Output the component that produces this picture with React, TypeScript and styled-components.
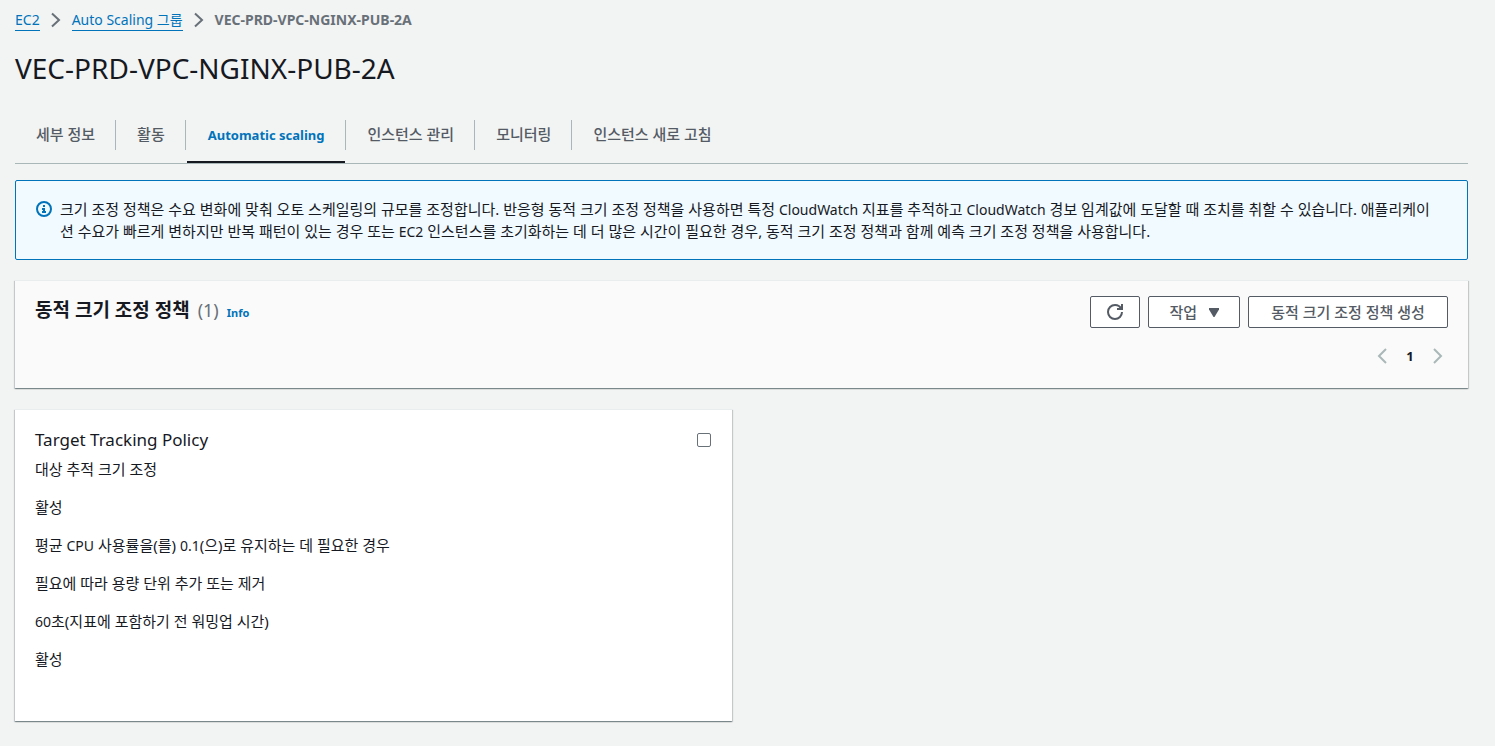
import React from "react";
import styled, { createGlobalStyle, css } from "styled-components";

const GlobalStyle = createGlobalStyle`
  *, *::before, *::after { box-sizing: border-box; }
  body {
    margin: 0;
    background: #f2f3f3;
    color: #16191f;
    font-family: "Noto Sans", "Noto Sans CJK KR", sans-serif;
    font-size: 15px;
    line-height: 22px;
  }
  h1, h2, h3, p, ul, ol { margin: 0; padding: 0; font-weight: 400; }
  ul, ol { list-style: none; }
  button, input { font: inherit; color: inherit; margin: 0; }
`;

const Page = styled.main`
  padding: 9px 27px 24px 15px;
`;

const Latin = styled.span`
  font-size: 14px;
  line-height: 1;
`;

const Breadcrumbs = styled.ol`
  display: flex;
  align-items: center;
  font-size: 14px;
`;

const Crumb = styled.li`
  display: flex;
  align-items: center;
  color: #687078;
  font-weight: 700;
`;

const CrumbLink = styled.a`
  color: #0073bb;
  font-weight: 400;
  line-height: 20px;
  text-decoration: none;
  border-bottom: 1px solid #0073bb;
`;

const CrumbArrow = styled.svg`
  width: 10px;
  height: 16px;
  margin: 0 11px;
  flex: none;
`;

const PageTitle = styled.h1`
  margin-top: 19px;
  font-size: 28px;
  line-height: 36px;
`;

const TabBar = styled.div`
  display: flex;
  margin-top: 24px;
  border-bottom: 1px solid #aab7b8;
`;

const TabCell = styled.div`
  display: flex;
  height: 53px;
  & + &::before {
    content: "";
    width: 1px;
    height: 30px;
    margin-top: 10px;
    background: #aab7b8;
  }
`;

const Tab = styled.button<{ $active?: boolean }>`
  display: flex;
  align-items: flex-start;
  padding: 13px 20px 0 21px;
  border: 0;
  border-bottom: 2px solid transparent;
  background: none;
  color: #545b64;
  font-weight: 500;
  line-height: 22px;
  ${({ $active }) =>
    $active &&
    css`
      margin-left: 1px;
      padding: 13px 21px 0;
      border-bottom-color: #16191f;
      color: #0073bb;
      font-size: 13px;
      font-weight: 700;
      line-height: 24px;
    `}
`;

const Alert = styled.div`
  display: flex;
  gap: 8px;
  margin-top: 16px;
  padding: 17px 30px 17px 20px;
  border: 1px solid #0073bb;
  border-radius: 2px;
  background: #f1faff;
`;

const AlertIcon = styled.svg`
  flex: none;
  width: 16px;
  height: 16px;
  margin-top: 3px;
`;

const AlertText = styled.p`
  flex: 1;
`;

const Panel = styled.section`
  background: #fafafa;
  border-top: 1px solid #eaeded;
  box-shadow: 0 1px 1px 0 rgba(0, 28, 36, 0.3), 1px 1px 1px 0 rgba(0, 28, 36, 0.15),
    -1px 1px 1px 0 rgba(0, 28, 36, 0.15);
`;

const PolicyHeader = styled(Panel)`
  margin-top: 20px;
  padding: 15px 20px 21px;
`;

const HeaderRow = styled.div`
  display: flex;
  justify-content: space-between;
`;

const Heading = styled.div`
  display: flex;
  align-items: baseline;
`;

const PanelTitle = styled.h2`
  font-size: 19px;
  font-weight: 700;
  line-height: 28px;
`;

const Count = styled.span`
  margin-left: 8px;
  color: #687078;
  font-size: 18px;
`;

const InfoLink = styled.a`
  margin-left: 8px;
  color: #0073bb;
  font-size: 11px;
  font-weight: 700;
  text-decoration: none;
`;

const Actions = styled.div`
  display: flex;
  gap: 8px;
`;

const Button = styled.button<{ $icon?: boolean; $wide?: boolean }>`
  display: flex;
  align-items: center;
  justify-content: center;
  gap: 12px;
  height: 32px;
  min-width: ${({ $wide }) => ($wide ? "200px" : "0")};
  padding: 0 ${({ $icon }) => ($icon ? 16 : 20)}px;
  border: 1px solid #545b64;
  border-radius: 2px;
  background: #fff;
  color: #545b64;
  font-weight: 500;
`;

const Pagination = styled.nav`
  display: flex;
  justify-content: flex-end;
  align-items: center;
  margin-top: 17px;
  padding-right: 5px;
`;

const PageButton = styled.button`
  display: flex;
  align-items: center;
  justify-content: center;
  padding: 0;
  border: 0;
  background: none;
  line-height: 22px;
`;

const PageNumber = styled(PageButton)`
  width: 46px;
  font-size: 13px;
  font-weight: 700;
`;

const Cards = styled.div`
  display: grid;
  grid-template-columns: 1fr 1fr;
  gap: 20px;
  margin-top: 21px;
`;

const Card = styled(Panel)`
  padding: 19px 20px 51px;
  background: #fff;
`;

const CardTitle = styled.label`
  display: flex;
  justify-content: space-between;
  align-items: center;
  font-size: 17px;
  line-height: 22px;
`;

const Checkbox = styled.input`
  appearance: none;
  width: 14px;
  height: 14px;
  margin-right: 1px;
  border: 1px solid #687078;
  border-radius: 2px;
  background: #fff;
`;

const Details = styled.ul`
  display: grid;
  gap: 16px;
  margin-top: 7px;
`;

const Chevron = () => (
  <CrumbArrow viewBox="0 0 10 16" aria-hidden="true">
    <path d="M1 1.500 8 8l-7 6.500" fill="none" stroke="#687078" strokeWidth="2" />
  </CrumbArrow>
);

const tabs = ["세부 정보", "활동", "Automatic scaling", "인스턴스 관리", "모니터링", "인스턴스 새로 고침"];

export default function App() {
  return (
    <>
      <GlobalStyle />
      <Page>
        <nav aria-label="Breadcrumbs">
          <Breadcrumbs>
            <Crumb>
              <CrumbLink href="#ec2">EC2</CrumbLink>
              <Chevron />
            </Crumb>
            <Crumb>
              <CrumbLink href="#groups">Auto Scaling 그룹</CrumbLink>
              <Chevron />
            </Crumb>
            <Crumb aria-current="page">VEC-PRD-VPC-NGINX-PUB-2A</Crumb>
          </Breadcrumbs>
        </nav>
        <PageTitle>VEC-PRD-VPC-NGINX-PUB-2A</PageTitle>
        <TabBar role="tablist">
          {tabs.map((label, i) => (
            <TabCell key={label} role="presentation">
              <Tab type="button" role="tab" aria-selected={i === 2} $active={i === 2}>
                {label}
              </Tab>
            </TabCell>
          ))}
        </TabBar>
        <Alert>
          <AlertIcon viewBox="0 0 16 16" aria-hidden="true">
            <g fill="none" stroke="#0073bb" strokeWidth="2">
              <circle cx="8" cy="8" r="7" />
              <path d="M8 11V8H6M10 11H6M8 4v2" />
            </g>
          </AlertIcon>
          <AlertText>
            크기 조정 정책은 수요 변화에 맞춰 오토 스케일링의 규모를 조정합니다. 반응형 동적 크기 조정 정책을 사용하면 특정{" "}
            <Latin>CloudWatch</Latin> 지표를 추적하고 <Latin>CloudWatch</Latin> 경보 임계값에 도달할 때 조치를 취할 수
            있습니다. 애플리케이션 수요가 빠르게 변하지만 반복 패턴이 있는 경우 또는 <Latin>EC2</Latin> 인스턴스를
            초기화하는 데 더 많은 시간이 필요한 경우, 동적 크기 조정 정책과 함께 예측 크기 조정 정책을 사용합니다.
          </AlertText>
        </Alert>
        <PolicyHeader>
          <HeaderRow>
            <Heading>
              <PanelTitle>동적 크기 조정 정책</PanelTitle>
              <Count>(1)</Count>
              <InfoLink href="#info">Info</InfoLink>
            </Heading>
            <Actions>
              <Button type="button" aria-label="새로 고침" $icon>
                <svg width="16" height="16" viewBox="0 0 16 16" aria-hidden="true">
                  <g fill="none" stroke="#545b64" strokeWidth="2">
                    <path d="M10 5h5V0" />
                    <path d="M15 8a7 7 0 0 1-14 0 7 7 0 0 1 7-7 6.900 6.900 0 0 1 6.300 4" />
                  </g>
                </svg>
              </Button>
              <Button type="button">
                작업
                <svg width="10" height="9" viewBox="0 0 10 9" aria-hidden="true">
                  <path d="M0 0h10v1.500L5.500 9h-1L0 1.500z" fill="#545b64" />
                </svg>
              </Button>
              <Button type="button" $wide>
                동적 크기 조정 정책 생성
              </Button>
            </Actions>
          </HeaderRow>
          <Pagination aria-label="Pagination">
            <PageButton type="button" aria-label="Previous page">
              <svg width="10" height="16" viewBox="0 0 10 16" aria-hidden="true">
                <path d="M9 1 2 8l7 7" fill="none" stroke="#aab7b8" strokeWidth="2" />
              </svg>
            </PageButton>
            <PageNumber type="button" aria-current="page">
              1
            </PageNumber>
            <PageButton type="button" aria-label="Next page">
              <svg width="10" height="16" viewBox="0 0 10 16" aria-hidden="true">
                <path d="m1 1 7 7-7 7" fill="none" stroke="#aab7b8" strokeWidth="2" />
              </svg>
            </PageButton>
          </Pagination>
        </PolicyHeader>
        <Cards>
          <Card>
            <CardTitle>
              Target Tracking Policy
              <Checkbox type="checkbox" />
            </CardTitle>
            <Details>
              <li>대상 추적 크기 조정</li>
              <li>활성</li>
              <li>
                평균 <Latin>CPU</Latin> 사용률을(를) <Latin>0.1</Latin>(으)로 유지하는 데 필요한 경우
              </li>
              <li>필요에 따라 용량 단위 추가 또는 제거</li>
              <li>
                <Latin>60</Latin>초(지표에 포함하기 전 워밍업 시간)
              </li>
              <li>활성</li>
            </Details>
          </Card>
        </Cards>
      </Page>
    </>
  );
}
